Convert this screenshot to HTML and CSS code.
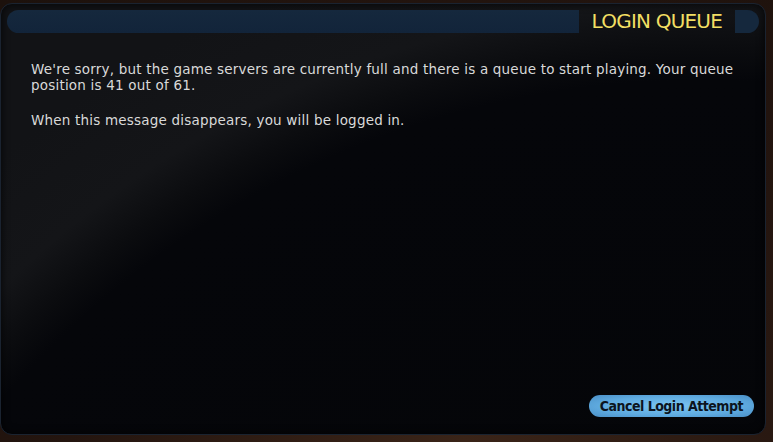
FILE: index.html
```html
<!DOCTYPE html>
<html lang="en">
  <head>
    <meta charset="UTF-8" />
    <title>Login Queue</title>
    <link rel="stylesheet" href="styles.css">
  </head>
  <body>
    <div class="dialog">
      <div class="dialog-header">
        <div class="header-bar"></div>
        <h1 class="dialog-title">LOGIN QUEUE</h1>
        <div class="header-cap"></div>
      </div>
      <div class="dialog-body">
        <p>We're sorry, but the game servers are currently full and there is a queue to start playing. Your queue position is 41 out of 61.</p>
        <p>When this message disappears, you will be logged in.</p>
      </div>
      <div class="dialog-footer">
        <button class="btn-cancel">Cancel Login Attempt</button>
      </div>
    </div>
  </body>
</html>
```

FILE: styles.css
```css
html,
body {
  height: 100%;
}
body {
  margin: 0;
  padding: 3px 7px 7px 0;
  box-sizing: border-box;
  background: radial-gradient(ellipse at 60% 100%, #3a2418 0%, #24150f 60%, #1c110c 100%);
  font-family: "DejaVu Sans", "Liberation Sans", sans-serif;
  color: #d9d9d9;
}
.dialog {
  height: 100%;
  box-sizing: border-box;
  display: flex;
  flex-direction: column;
  border-radius: 12px;
  border: 1px solid #1a2330;
  background:
    radial-gradient(circle 1100px at 700px 1000px, #040507 0%, #05060a 84%, #0b0c0f 87%, #141518 91%, #121316 100%);
  box-shadow: inset 0 0 8px rgba(0, 0, 0, 0.8);
}
.dialog-header {
  display: flex;
  align-items: center;
  height: 23px;
  margin: 6px 6px 0 6px;
}
.header-bar {
  flex: 1;
  height: 100%;
  background: linear-gradient(180deg, #15283d, #12243a);
  border-radius: 12px 0 0 12px;
}
.dialog-title {
  margin: 0 13px 0 13px;
  font-size: 20px;
  font-weight: normal;
  letter-spacing: -0.8px;
  color: #f2df63;
  line-height: 23px;
}
.header-cap {
  width: 24px;
  height: 100%;
  background: #15283d;
  border-radius: 0 12px 12px 0;
}
.dialog-body {
  flex: 1;
  padding: 28px 30px 0 30px;
  font-size: 13.5px;
  line-height: 16px;
  letter-spacing: 0.2px;
}
.dialog-body p {
  margin: 0 0 19px 0;
}
.dialog-footer {
  display: flex;
  justify-content: flex-end;
  padding: 0 11px 17px 0;
}
.btn-cancel {
  height: 22px;
  padding: 0 11px;
  border: none;
  border-radius: 11px;
  background: radial-gradient(ellipse at 50% 50%, #7cc6f2 0%, #5fabe0 60%, #4a8fc6 100%);
  color: #0c1420;
  font-family: "DejaVu Sans Condensed", "DejaVu Sans", sans-serif;
  font-weight: bold;
  font-size: 14px;
  letter-spacing: -0.5px;
  line-height: 22px;
}
```
